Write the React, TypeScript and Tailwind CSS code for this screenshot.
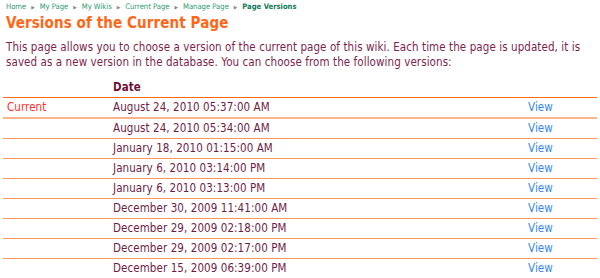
const crumbs = ["Home", "My Page", "My Wikis", "Current Page", "Manage Page"];

const versions = [
  { label: "Current", date: "August 24, 2010 05:37:00 AM" },
  { label: "", date: "August 24, 2010 05:34:00 AM" },
  { label: "", date: "January 18, 2010 01:15:00 AM" },
  { label: "", date: "January 6, 2010 03:14:00 PM" },
  { label: "", date: "January 6, 2010 03:13:00 PM" },
  { label: "", date: "December 30, 2009 11:41:00 AM" },
  { label: "", date: "December 29, 2009 02:18:00 PM" },
  { label: "", date: "December 29, 2009 02:17:00 PM" },
  { label: "", date: "December 15, 2009 06:39:00 PM" },
];

export default function App() {
  return (
    <div className="w-[600px] h-[278px] overflow-hidden bg-white font-['DejaVu_Sans_Condensed','DejaVu_Sans',Verdana,sans-serif]">
      <div className="px-[6px] pt-[2px]">
        <nav className="flex items-center gap-[5px] text-[7.6px] leading-[10px] text-[#2d9970]">
          {crumbs.map((c) => (
            <span key={c} className="flex items-center gap-[5px]">
              <span>{c}</span>
              <span className="text-[5px] text-[#8a8a8a]">▶</span>
            </span>
          ))}
          <span className="font-bold text-[#127a57]">Page Versions</span>
        </nav>
        <h1 className="mt-[2px] text-[15px] leading-[18px] tracking-[0.1px] font-bold text-[#ff6616]">
          Versions of the Current Page
        </h1>
        <p className="mt-[8px] text-[11.5px] leading-[15px] tracking-[0.08px] text-[#7d1f4d]">
          This page allows you to choose a version of the current page of this wiki. Each time the page is updated, it is saved as a new version in the database. You can choose from the following versions:
        </p>
      </div>
      <div className="ml-[3px] mt-[9px] w-[594px] text-[11.5px] tracking-[0.08px]">
        <div className="grid h-[19px] grid-cols-[110px_1fr_69px] items-center border-b border-solid border-b-[#ff6a13]">
          <div></div>
          <div className="font-bold text-[#6e1236]">Date</div>
          <div></div>
        </div>
        {versions.map((v, i) => (
          <div
            key={v.date}
            className={
              i === 0
                ? "grid h-[21px] grid-cols-[110px_1fr_69px] items-center border-b-2 border-solid border-b-[#fdb38c]"
                : "grid h-[20px] grid-cols-[110px_1fr_69px] items-center border-b border-solid border-b-[#ff975a]"
            }
          >
            <div className="pl-[4px] text-[#ff2e2e]">{v.label}</div>
            <div className="text-[#6f1d45]">{v.date}</div>
            <div className="text-[#3287f2]">View</div>
          </div>
        ))}
      </div>
    </div>
  );
}
